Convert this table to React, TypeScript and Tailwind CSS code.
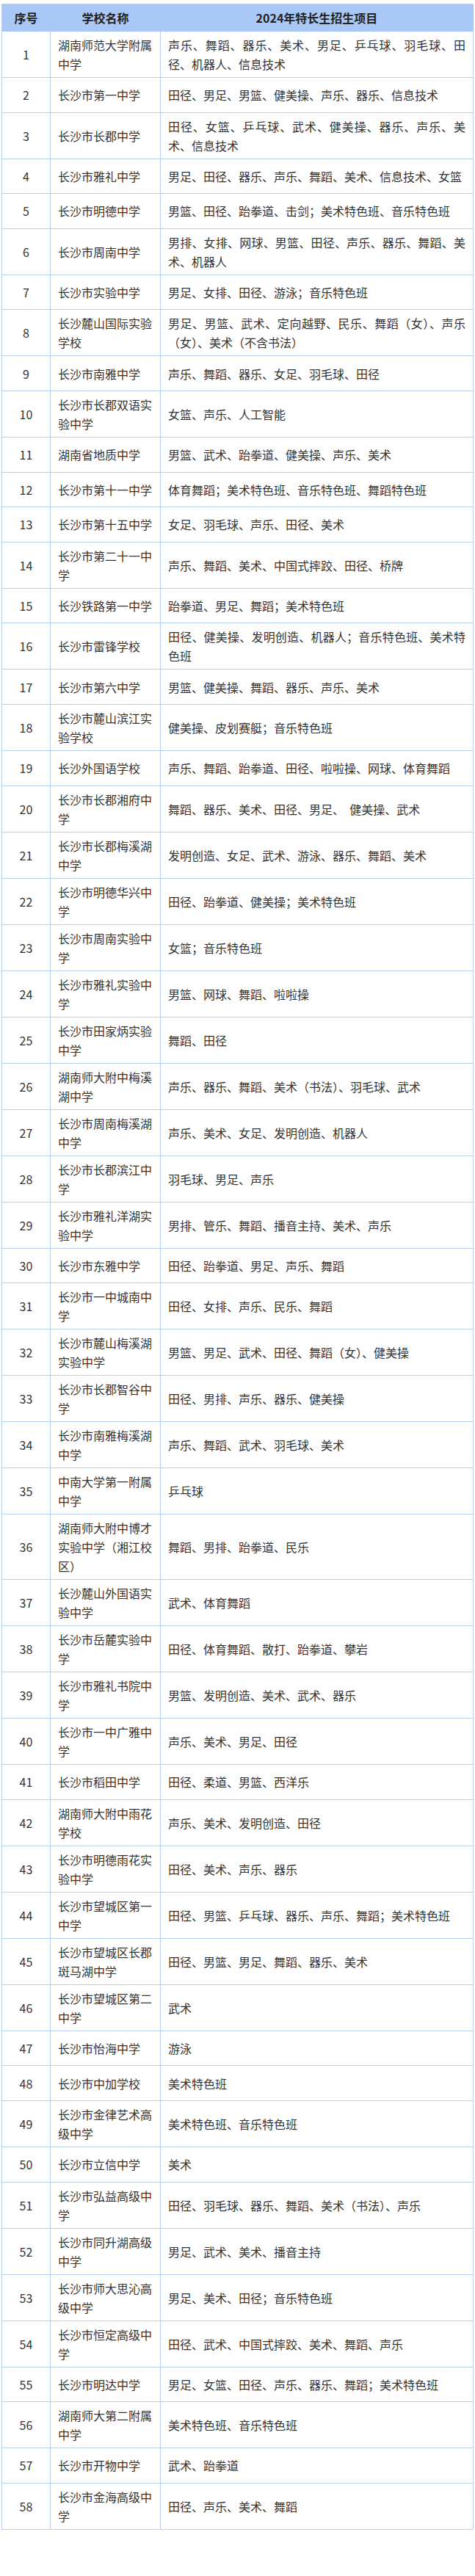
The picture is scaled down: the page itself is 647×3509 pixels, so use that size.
import React from 'react'

type Row = [string, string]

const rows: Row[] = [
  ['湖南师范大学附属中学', '声乐、舞蹈、器乐、美术、男足、乒乓球、羽毛球、田径、机器人、信息技术'],
  ['长沙市第一中学', '田径、男足、男篮、健美操、声乐、器乐、信息技术'],
  ['长沙市长郡中学', '田径、女篮、乒乓球、武术、健美操、器乐、声乐、美术、信息技术'],
  ['长沙市雅礼中学', '男足、田径、器乐、声乐、舞蹈、美术、信息技术、女篮'],
  ['长沙市明德中学', '男篮、田径、跆拳道、击剑；美术特色班、音乐特色班'],
  ['长沙市周南中学', '男排、女排、网球、男篮、田径、声乐、器乐、舞蹈、美术、机器人'],
  ['长沙市实验中学', '男足、女排、田径、游泳；音乐特色班'],
  ['长沙麓山国际实验学校', '男足、男篮、武术、定向越野、民乐、舞蹈（女）、声乐（女）、美术（不含书法）'],
  ['长沙市南雅中学', '声乐、舞蹈、器乐、女足、羽毛球、田径'],
  ['长沙市长郡双语实验中学', '女篮、声乐、人工智能'],
  ['湖南省地质中学', '男篮、武术、跆拳道、健美操、声乐、美术'],
  ['长沙市第十一中学', '体育舞蹈；美术特色班、音乐特色班、舞蹈特色班'],
  ['长沙市第十五中学', '女足、羽毛球、声乐、田径、美术'],
  ['长沙市第二十一中学', '声乐、舞蹈、美术、中国式摔跤、田径、桥牌'],
  ['长沙铁路第一中学', '跆拳道、男足、舞蹈；美术特色班'],
  ['长沙市雷锋学校', '田径、健美操、发明创造、机器人；音乐特色班、美术特色班'],
  ['长沙市第六中学', '男篮、健美操、舞蹈、器乐、声乐、美术'],
  ['长沙市麓山滨江实验学校', '健美操、皮划赛艇；音乐特色班'],
  ['长沙外国语学校', '声乐、舞蹈、跆拳道、田径、啦啦操、网球、体育舞蹈'],
  ['长沙市长郡湘府中学', '舞蹈、器乐、美术、田径、男足、\u00a0 健美操、武术'],
  ['长沙市长郡梅溪湖中学', '发明创造、女足、武术、游泳、器乐、舞蹈、美术'],
  ['长沙市明德华兴中学', '田径、跆拳道、健美操；美术特色班'],
  ['长沙市周南实验中学', '女篮；音乐特色班'],
  ['长沙市雅礼实验中学', '男篮、网球、舞蹈、啦啦操'],
  ['长沙市田家炳实验中学', '舞蹈、田径'],
  ['湖南师大附中梅溪湖中学', '声乐、器乐、舞蹈、美术（书法）、羽毛球、武术'],
  ['长沙市周南梅溪湖中学', '声乐、美术、女足、发明创造、机器人'],
  ['长沙市长郡滨江中学', '羽毛球、男足、声乐'],
  ['长沙市雅礼洋湖实验中学', '男排、管乐、舞蹈、播音主持、美术、声乐'],
  ['长沙市东雅中学', '田径、跆拳道、男足、声乐、舞蹈'],
  ['长沙市一中城南中学', '田径、女排、声乐、民乐、舞蹈'],
  ['长沙市麓山梅溪湖实验中学', '男篮、男足、武术、田径、舞蹈（女）、健美操'],
  ['长沙市长郡智谷中学', '田径、男排、声乐、器乐、健美操'],
  ['长沙市南雅梅溪湖中学', '声乐、舞蹈、武术、羽毛球、美术'],
  ['中南大学第一附属中学', '乒乓球'],
  ['湖南师大附中博才实验中学（湘江校区）', '舞蹈、男排、跆拳道、民乐'],
  ['长沙麓山外国语实验中学', '武术、体育舞蹈'],
  ['长沙市岳麓实验中学', '田径、体育舞蹈、散打、跆拳道、攀岩'],
  ['长沙市雅礼书院中学', '男篮、发明创造、美术、武术、器乐'],
  ['长沙市一中广雅中学', '声乐、美术、男足、田径'],
  ['长沙市稻田中学', '田径、柔道、男篮、西洋乐'],
  ['湖南师大附中雨花学校', '声乐、美术、发明创造、田径'],
  ['长沙市明德雨花实验中学', '田径、美术、声乐、器乐'],
  ['长沙市望城区第一中学', '田径、男篮、乒乓球、器乐、声乐、舞蹈；美术特色班'],
  ['长沙市望城区长郡斑马湖中学', '田径、男篮、男足、舞蹈、器乐、美术'],
  ['长沙市望城区第二中学', '武术'],
  ['长沙市怡海中学', '游泳'],
  ['长沙市中加学校', '美术特色班'],
  ['长沙市金律艺术高级中学', '美术特色班、音乐特色班'],
  ['长沙市立信中学', '美术'],
  ['长沙市弘益高级中学', '田径、羽毛球、器乐、舞蹈、美术（书法）、声乐'],
  ['长沙市同升湖高级中学', '男足、武术、美术、播音主持'],
  ['长沙市师大思沁高级中学', '男足、美术、田径；音乐特色班'],
  ['长沙市恒定高级中学', '田径、武术、中国式摔跤、美术、舞蹈、声乐'],
  ['长沙市明达中学', '男足、女篮、田径、声乐、器乐、舞蹈；美术特色班'],
  ['湖南师大第二附属中学', '美术特色班、音乐特色班'],
  ['长沙市开物中学', '武术、跆拳道'],
  ['长沙市金海高级中学', '田径、声乐、美术、舞蹈'],
]

const cell = 'flex items-center border-r border-b border-[#b8cff2] px-[10px] py-[5px] min-h-[47.6px]'
const head = 'flex items-center justify-center border-r border-b border-[#a6c6f4] py-[5px] font-bold text-[#222]'

export default function App() {
  return (
    <div className="min-h-screen bg-white pt-[5px] pl-[2px] font-['Noto_Sans_CJK_SC',sans-serif] text-[16px] leading-[26px] text-[#333]">
      <div className="w-[643px] border-l border-t border-[#b8cff2]">
        {/* header */}
        <div className="grid grid-cols-[66px_150px_1fr] bg-[#a9c8f6]">
          <div className={head}>序号</div>
          <div className={head}>学校名称</div>
          <div className={head}>2024年特长生招生项目</div>
        </div>

        {rows.map(([school, items], i) => (
          <div key={i} className="grid grid-cols-[66px_150px_1fr]">
            <div className={cell + ' justify-center'}>{i + 1}</div>
            <div className={cell}>
              <span className="block w-full">{school}</span>
            </div>
            <div className={cell}>
              <span className="block w-full text-justify">{items}</span>
            </div>
          </div>
        ))}
      </div>
    </div>
  )
}
